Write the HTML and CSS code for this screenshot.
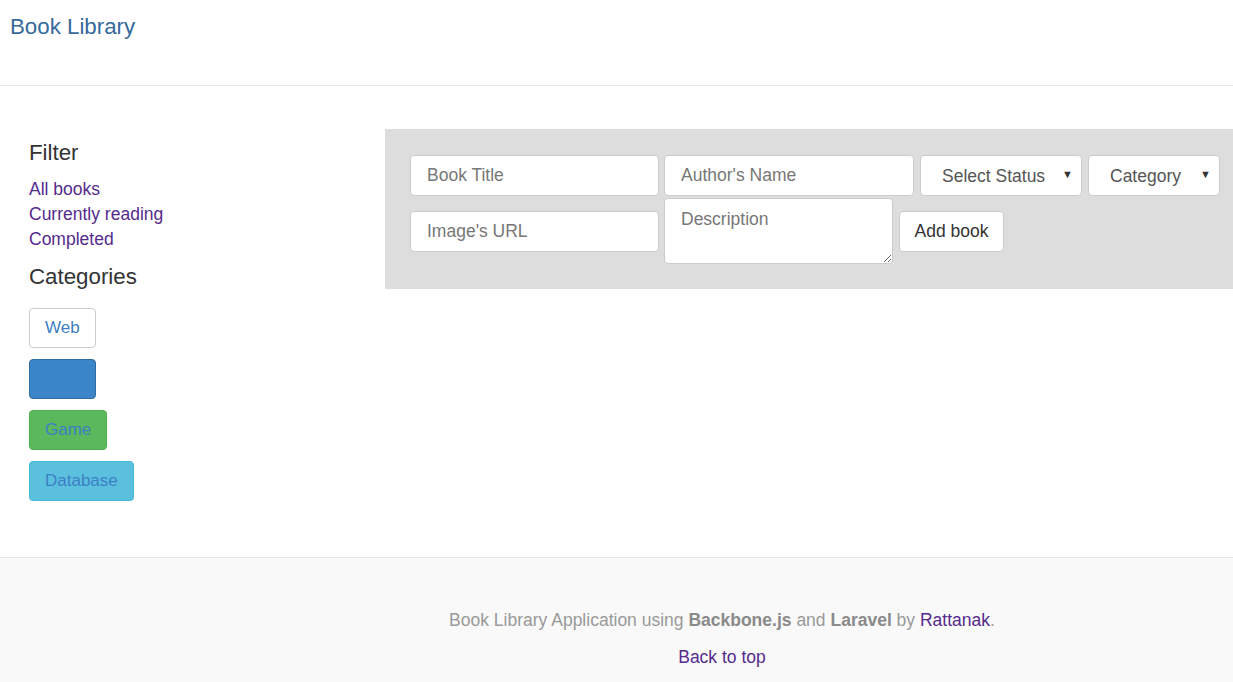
FILE: index.html
```html
<!DOCTYPE html>
<html lang="en">
<head>
<meta charset="utf-8">
<title>Book Library</title>
<link rel="stylesheet" href="styles.css">
</head>
<body>
<header class="navbar">
  <a class="brand" href="#">Book Library</a>
</header>
<main class="main">
  <aside class="sidebar">
    <h3 class="side-title">Filter</h3>
    <ul class="filter-list">
      <li><a href="#">All books</a></li>
      <li><a href="#">Currently reading</a></li>
      <li><a href="#">Completed</a></li>
    </ul>
    <h3 class="side-title cat-title">Categories</h3>
    <div class="cat-list">
      <button class="cat-btn cat-default">Web</button>
      <button class="cat-btn cat-primary cat-empty"></button>
      <button class="cat-btn cat-success">Game</button>
      <button class="cat-btn cat-info">Database</button>
    </div>
  </aside>
  <section class="panel">
    <form class="book-form">
      <div class="form-row row-top">
        <input class="field w-title" type="text" placeholder="Book Title">
        <input class="field w-author" type="text" placeholder="Author's Name">
        <span class="select-wrap w-status">
          <select class="field select"><option>Select Status</option></select>
          <span class="arrow">▼</span>
        </span>
        <span class="select-wrap w-cat">
          <select class="field select"><option>Category</option></select>
          <span class="arrow">▼</span>
        </span>
      </div>
      <div class="form-row row-bottom">
        <input class="field w-title" type="text" placeholder="Image's URL">
        <textarea class="field textarea" placeholder="Description"></textarea>
        <button class="add-btn" type="button">Add book</button>
      </div>
    </form>
  </section>
</main>
<footer class="footer">
  <p class="footer-text">Book Library Application using <b>Backbone.js</b> and <b>Laravel</b> by <a href="#">Rattanak</a>.</p>
  <p class="footer-text"><a href="#">Back to top</a></p>
</footer>
</body>
</html>
```
FILE: styles.css
```css
* { box-sizing: border-box; }
html, body { margin: 0; padding: 0; }
body {
  font-family: "Liberation Sans", Arial, sans-serif;
  font-size: 17.5px;
  color: #333;
  background: #fff;
  overflow: hidden;
}
a { color: #552b8c; text-decoration: none; }

.navbar {
  height: 86px;
  padding: 14px 0 0 10px;
  border-bottom: 1px solid #e7e7e7;
}
.brand {
  font-size: 22.3px;
  line-height: 26px;
  color: #36699b;
}

.main {
  display: flex;
  padding-top: 43px;
  padding-bottom: 56px;
}
.sidebar {
  width: 385px;
  flex: none;
  padding-left: 29px;
}
.side-title {
  margin: 11px 0 0;
  font-size: 22.3px;
  line-height: 26px;
  font-weight: 400;
  color: #333;
}
.filter-list {
  list-style: none;
  margin: 11px 0 0;
  padding: 0;
  line-height: 25px;
}
.side-title.cat-title { margin-top: 12px; }
.cat-list {
  margin-top: 18px;
  display: flex;
  flex-direction: column;
  align-items: flex-start;
  gap: 11px;
}
.cat-btn {
  height: 40px;
  padding: 0 15px;
  font-family: inherit;
  font-size: 17px;
  color: #3d7fc5;
  border: 1px solid #ccc;
  border-radius: 4px;
  background: #fff;
}
.cat-primary { background: #3b86c8; border-color: #2e6da4; }
.cat-success { background: #5cb85c; border-color: #4cae4c; }
.cat-info { background: #5bc0de; border-color: #46b8da; }
.cat-empty { width: 67px; }

.panel {
  flex: 1;
  height: 160px;
  background: #ddd;
  padding: 26px 0 0 25px;
}
.form-row {
  display: flex;
  align-items: center;
}
.row-top { gap: 5px; }
.row-bottom { gap: 5px; margin-top: 2px; }
.field {
  height: 41px;
  font-family: inherit;
  font-size: 17.5px;
  color: #555;
  background: #fff;
  border: 1px solid #ccc;
  border-radius: 4px;
  padding: 0 16px;
  outline: none;
}
.field::placeholder { color: #777; }
.w-title { width: 249px; }
.w-author { width: 250px; margin-right: 1px; }
.select-wrap {
  position: relative;
  display: block;
  flex: none;
}
.w-status { width: 162px; margin-right: 1px; }
.w-cat { width: 132px; }
.select {
  width: 100%;
  appearance: none;
  -webkit-appearance: none;
  padding-left: 21px;
  color: #555;
}
.arrow {
  position: absolute;
  right: 9px;
  top: 14px;
  font-size: 11px;
  line-height: 11px;
  color: #333;
  pointer-events: none;
}
.textarea {
  width: 229px;
  height: 66px;
  padding: 10px 16px;
  resize: vertical;
  margin-right: 1px;
}
.add-btn {
  width: 105px;
  height: 41px;
  font-family: inherit;
  font-size: 17.5px;
  color: #333;
  background: #fff;
  border: 1px solid #ccc;
  border-radius: 4px;
  padding: 0;
}

.footer {
  background: #f9f9f9;
  border-top: 1px solid #e7e7e7;
  padding: 50px 0 13px 211px;
  text-align: center;
  color: #999;
}
.footer-text {
  margin: 0;
  line-height: 25px;
}
.footer-text + .footer-text { margin-top: 12px; }
.footer b { color: #8a8a8a; }
```
